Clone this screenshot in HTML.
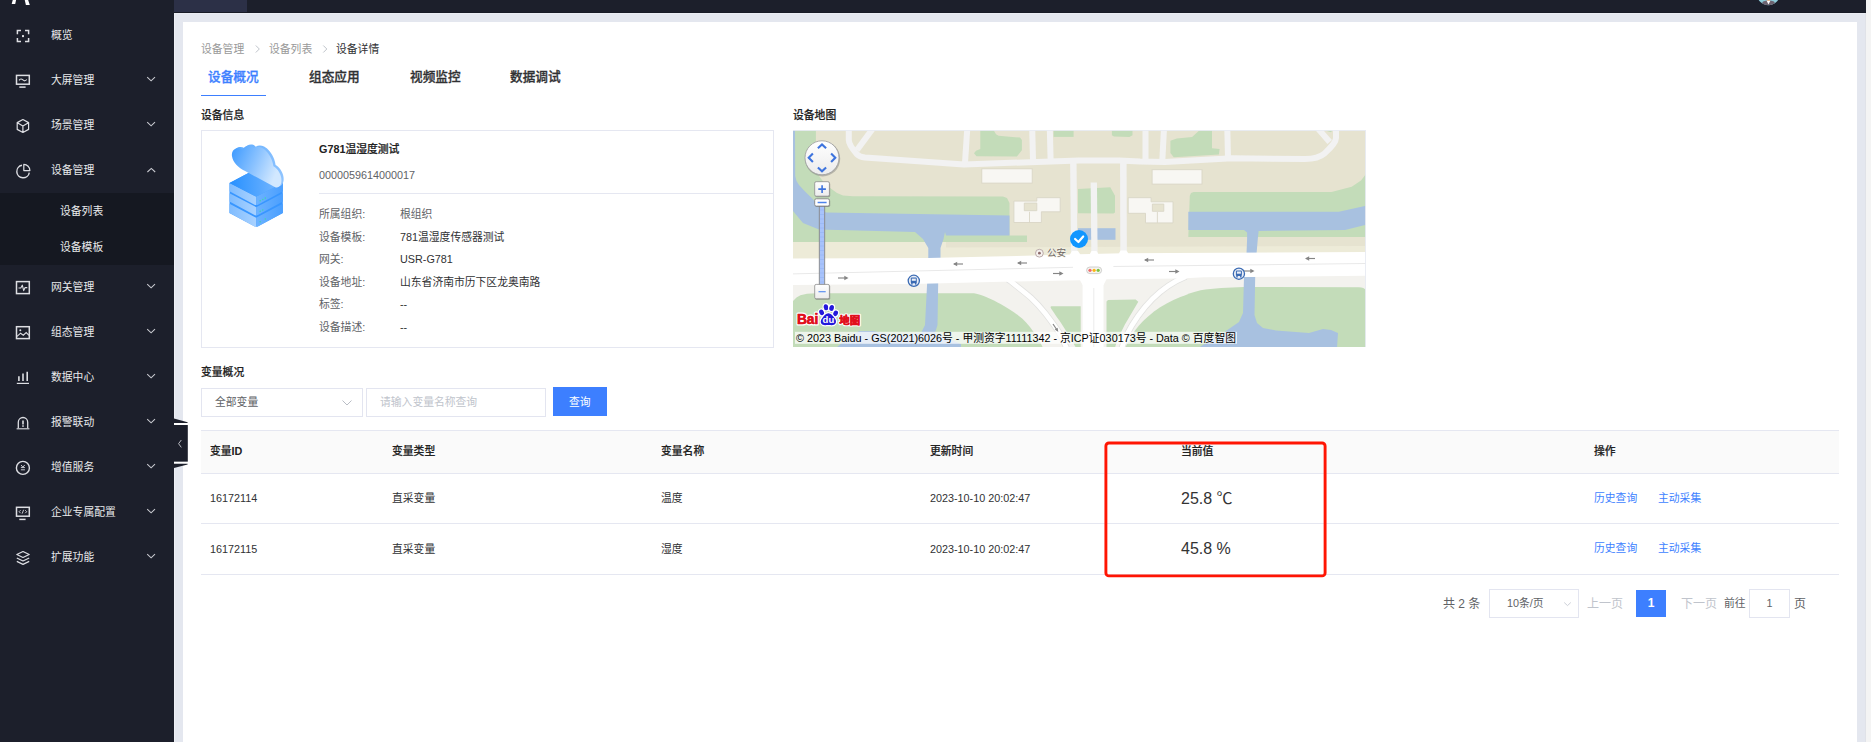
<!DOCTYPE html>
<html lang="zh-CN">
<head>
<meta charset="utf-8">
<title>设备详情</title>
<style>
*{box-sizing:border-box;margin:0;padding:0}
html,body{width:1871px;height:742px;overflow:hidden}
body{position:relative;background:#e4e7ef;font-family:"Liberation Sans","Noto Sans CJK SC",sans-serif;font-size:10.8px;color:#333;line-height:1}
.abs{position:absolute;white-space:nowrap}
#side{position:absolute;left:0;top:0;width:174px;height:742px;background:#1c1f2b}
#sub{position:absolute;left:0;top:193px;width:174px;height:72px;background:#151821}
.mi{position:absolute;left:51px;color:#e9eaec;font-size:10.8px;line-height:14px;white-space:nowrap}
.si{position:absolute;left:60px;color:#e9eaec;font-size:10.8px;line-height:14px;white-space:nowrap}
.ic{position:absolute;left:15px;width:16px;height:16px;overflow:visible}
.ar{position:absolute;left:147px;width:9px;height:6px}
#top{position:absolute;left:174px;top:0;width:1692px;height:13px;background:#1c1f2b}
#toptab{position:absolute;left:174px;top:0;width:73px;height:13px;background:#2c3047}
#scroll{position:absolute;left:1866px;top:0;width:5px;height:742px;background:#f4f4f4}
#card{position:absolute;left:183px;top:22px;width:1674px;height:720px;background:#fff}
.bc{font-size:10.8px;color:#999;top:42px;line-height:14px}
.tab{font-size:12.7px;font-weight:500;-webkit-text-stroke:0.3px;color:#303133;top:69px;line-height:16px}
.h{font-weight:500;-webkit-text-stroke:0.2px #222;color:#222;font-size:10.8px;line-height:14px}
.lb{color:#606266;left:319px;line-height:14px}
.vl{color:#303133;left:400px;line-height:14px}
.th{font-weight:500;-webkit-text-stroke:0.2px #222;color:#222;top:444px;line-height:14px}
.td{color:#303133;line-height:14px}
.lk{color:#3d7fff;line-height:14px}
.big{font-size:16px;color:#333;line-height:20px;left:1181px}
.hl{position:absolute;height:1px;background:#e5e7f1}
</style>
</head>
<body>
<div id="side">
<svg width="174" height="742" viewBox="0 0 174 742" style="position:absolute;left:0;top:0" fill="none" stroke="#dddee3" stroke-width="1.5">
<!-- logo clipped -->
<path d="M13,-1H16.300L15.200,3.900H11.700Z M24.500,-1H27.800L29.800,4.900H25.900Z" fill="#ffffff" stroke="none"/>
<!-- 1 overview -->
<path d="M17.4,34.2V30.6H21 M25,30.6H28.6V34.2 M28.6,38V41.6H25 M21,41.6H17.4V38"/>
<rect x="22" y="35.1" width="2" height="2" fill="#dddee3" stroke="none"/>
<!-- 2 big screen -->
<rect x="16.5" y="75.4" width="12.8" height="8.8"/>
<path d="M19,80.3C20.300,78.600 21.500,78.600 22.900,79.900S25.400,81.200 26.800,79.500" stroke-width="1.1"/>
<path d="M19.300,87.100H25.600" stroke-width="1.5"/>
<!-- 3 cube -->
<path d="M22.900,119.500L28.600,122.600V129.400L22.900,132.500L17.200,129.400V122.600Z M17.300,122.700L22.900,125.900L28.500,122.700 M22.900,125.900V132.400" stroke-linejoin="round" stroke-width="1.2"/>
<!-- 4 pie -->
<path d="M22,165.300A6.300,6.300 0 1 0 29.300,172.600" stroke-width="1.4"/>
<path d="M23.800,164.400A6.200,6.200 0 0 1 29.900,170.600H23.800Z" stroke-width="1.2" stroke-linejoin="round"/>
<!-- 5 gateway -->
<rect x="16.500" y="281.600" width="12.800" height="12"/>
<path d="M18.500,288H20.800L22.300,285.200L23.700,290.600L25.100,287.600H27.300" stroke-width="1.1" stroke-linejoin="round"/>
<!-- 6 picture -->
<rect x="16.500" y="326.700" width="12.800" height="11.900"/>
<path d="M17,336.400L20.600,333.200L23.300,335.200L26.200,332.600L29,335.300" stroke-width="1.1"/>
<circle cx="20.300" cy="330.300" r="1" fill="#dddee3" stroke="none"/>
<!-- 7 data -->
<path d="M16.800,383.400H29" stroke-width="1.2"/>
<path d="M18.900,376.300V381 M23,373.600V381 M27.200,371.800V381" stroke-width="1.6"/>
<!-- 8 alarm -->
<path d="M16.600,428.800H29.400" stroke-width="1.1"/>
<path d="M18.300,428.300V422.200A4.700,4.700 0 0 1 27.700,422.200V428.300" stroke-width="1.3"/>
<path d="M23,420.400V424.400" stroke-width="1.6"/><rect x="22.200" y="425.300" width="1.600" height="1.500" fill="#dddee3" stroke="none"/>
<!-- 9 value -->
<circle cx="22.900" cy="467.900" r="6.500" stroke-width="1.4"/>
<path d="M21.100,465L22.900,467.200L24.700,465 M20.900,467.600H24.900 M20.900,469.800H24.900" stroke-width="0.9"/>
<!-- 10 enterprise -->
<rect x="16.500" y="507.300" width="12.800" height="8.900"/>
<path d="M20.600,510.200L19.100,511.700L20.600,513.200 M25.200,510.200L26.700,511.700L25.200,513.200 M23.600,509.800L22.200,513.600" stroke-width="0.9"/>
<path d="M19.300,519.400H25.600" stroke-width="1.5"/>
<!-- 11 layers -->
<path d="M23,551.500L29.200,554.500L23,557.500L16.800,554.500Z" stroke-linejoin="round" stroke-width="1.2"/>
<path d="M16.800,558L23,561L29.200,558 M16.800,561.400L23,564.400L29.200,561.400" stroke-linejoin="round" stroke-width="1.2"/>
<!-- arrows -->
<g stroke="#c9cad0" stroke-width="1.1">
<path d="M147.200,77.200L151.100,80.800L155,77.200"/>
<path d="M147.200,122.200L151.100,125.800L155,122.200"/>
<path d="M147.400,172L151.300,168.400L155.200,172"/>
<path d="M147.200,284.200L151.100,287.800L155,284.200"/>
<path d="M147.200,329.200L151.100,332.800L155,329.200"/>
<path d="M147.200,374.200L151.100,377.800L155,374.200"/>
<path d="M147.200,419.200L151.100,422.800L155,419.200"/>
<path d="M147.200,464.200L151.100,467.800L155,464.200"/>
<path d="M147.200,509.200L151.100,512.800L155,509.200"/>
<path d="M147.200,554.200L151.100,557.800L155,554.200"/>
</g>
</svg>

  <div id="sub"></div>
  <div class="mi" style="top:28px">概览</div>
  <div class="mi" style="top:73px">大屏管理</div>
  <div class="mi" style="top:118px">场景管理</div>
  <div class="mi" style="top:163px">设备管理</div>
  <div class="si" style="top:204px">设备列表</div>
  <div class="si" style="top:240px">设备模板</div>
  <div class="mi" style="top:280px">网关管理</div>
  <div class="mi" style="top:325px">组态管理</div>
  <div class="mi" style="top:370px">数据中心</div>
  <div class="mi" style="top:415px">报警联动</div>
  <div class="mi" style="top:460px">增值服务</div>
  <div class="mi" style="top:505px">企业专属配置</div>
  <div class="mi" style="top:550px">扩展功能</div>
</div>
<div id="top"></div>
<div id="toptab"></div>
<div id="scroll"></div>
<div class="abs" style="left:174px;top:12px;width:1692px;height:1px;background:#181b26"></div>
<div class="abs" style="left:174px;top:13px;width:1692px;height:1px;background:#eaecf3"></div>
<div class="abs" style="left:174px;top:13px;width:1px;height:729px;background:#edeff5"></div>
<div class="abs" style="left:1865px;top:13px;width:1px;height:729px;background:#e0e2e8"></div>
<div id="card"></div>

<!-- breadcrumb -->
<div class="abs bc" style="left:201px">设备管理</div>
<div class="abs bc" style="left:269px">设备列表</div>
<div class="abs bc" style="left:336px;color:#303133">设备详情</div>

<!-- tabs -->
<div class="abs tab" style="left:208px;color:#3d7fff">设备概况</div>
<div class="abs tab" style="left:309px">组态应用</div>
<div class="abs tab" style="left:410px">视频监控</div>
<div class="abs tab" style="left:510px">数据调试</div>
<div class="abs" style="left:201px;top:95px;width:65px;height:1px;background:#3d7fff"></div>

<!-- device info -->
<div class="abs h" style="left:201px;top:108px">设备信息</div>
<div class="abs" style="left:201px;top:130px;width:573px;height:218px;border:1px solid #e5e7f1;background:#fff"></div>
<div class="abs h" style="left:319px;top:142px"><b style="-webkit-text-stroke:0">G781</b>温湿度测试</div>
<div class="abs" style="left:319px;top:168px;color:#606266;line-height:14px">0000059614000017</div>
<div class="hl" style="left:319px;top:193px;width:454px"></div>
<div class="abs lb" style="top:207px">所属组织:</div><div class="abs vl" style="top:207px;color:#606266">根组织</div>
<div class="abs lb" style="top:230px">设备模板:</div><div class="abs vl" style="top:230px">781温湿度传感器测试</div>
<div class="abs lb" style="top:252px">网关:</div><div class="abs vl" style="top:252px">USR-G781</div>
<div class="abs lb" style="top:275px">设备地址:</div><div class="abs vl" style="top:275px">山东省济南市历下区龙奥南路</div>
<div class="abs lb" style="top:297px">标签:</div><div class="abs vl" style="top:297px">--</div>
<div class="abs lb" style="top:320px">设备描述:</div><div class="abs vl" style="top:320px">--</div>

<!-- map -->
<div class="abs h" style="left:793px;top:108px">设备地图</div>
<div id="map" class="abs" style="left:793px;top:130px;width:573px;height:217px;background:#e6e3d0;overflow:hidden">
<svg width="573" height="218" viewBox="0 0 573 218" style="position:absolute;left:0;top:0;display:block">
<defs>
<linearGradient id="gbtn" x1="0" y1="0" x2="0" y2="1"><stop offset="0" stop-color="#ffffff"/><stop offset="1" stop-color="#ececec"/></linearGradient>
<linearGradient id="gtrk" x1="0" y1="0" x2="1" y2="0"><stop offset="0" stop-color="#8ea3d8"/><stop offset="0.5" stop-color="#a9c2f5"/><stop offset="1" stop-color="#8ea3d8"/></linearGradient>
</defs>
<rect width="573" height="218" fill="#e6e3d0"/>
<!-- pale strip above main road -->
<polygon points="0,112 153,112 153,117.5 573,116 573,124 0,130" fill="#edebd8"/>
<!-- below-road base -->
<polygon points="0,150 573,142 573,218 0,218" fill="#f3f2ee"/>
<!-- greens top -->
<g fill="#c3dcb9">
<polygon points="0,0 22.9,0 22.9,36 26,46 32,54 37.8,58.4 44,63 50,65.5 60,66.3 210,66.5 214,68 216.5,73 216.5,112 0,112"/>
<polygon points="153,105.5 234,105.5 234,112 153,112"/>
<polygon points="187.300,0 200.500,0 203,4.300 205.600,5.700 227,7.600 228.900,10.100 228.900,20.200 223.900,26.600 183.500,26.200 181,23.300 183,20.700 187.300,18.900"/>
<rect x="260.6" y="0" width="20" height="6.9"/>
<polygon points="318.9,0 339.5,0 339.5,5.3 336.4,6.9 321,6.5 318.9,5.3"/>
<polygon points="406.8,0 419,0 419,18.3 426.6,19.1 425.9,24.5 380.8,27.2 377.4,22.9 377.4,10.7 383.8,8.4 399.1,6.9"/>
<polygon points="530.6,0 539.7,0 538,2.3"/>
<polygon points="285,58.9 317.3,57.3 322,65.7 322,82.5 320.5,83.5 285,83.3"/>
<polygon points="396.800,65.700 398,63 400.600,62 538.500,61.900 558.700,56.700 568,50.500 573,44.100 573,107 395.300,107"/>
</g>
<!-- water -->
<g fill="#a8c1e0">
<polygon points="0,0 2,0 2.2,46 3.5,51 6,55 12,61.5 19.5,68.7 26.9,78 33,82.5 216.5,85.6 216.5,105.5 153,105.5 152,102 150.5,109 147.5,118 147.5,129 135.3,129 135.3,118 130,109 122,102 26,99.5 10,93 0,81"/>
<polygon points="395.3,81.8 545.9,81.8 573,75.7 573,94.8 552,100.1 465.6,100.9 464.8,109 463.5,124 453.5,124 454.1,109 454.1,102.4 451,100.1 395.3,100.1"/>
<rect x="285" y="98.2" width="37.5" height="11.6"/>
</g>
<!-- greens bottom -->
<g fill="#c3dcb9">
<path d="M0,171L3.500,167.600L7.400,165.200L14,163.800L23,163.300L181,163.300C190,165 200,170 207.600,174C214,177.500 220,181.500 225.300,185.400C231,189.500 236,195 240.400,201.800C244,207 248,213 250,218H0Z"/>
<path d="M258.500,176.200H287.700V218H283C279,210 272,199 266,190C262,184 258.500,179.500 257.600,177.400Q257.500,176.200 258.500,176.200Z"/>
<polygon points="313.5,171.5 315,170.1 342.6,169.4 345.3,171.7 331.9,194.6 324.2,209.9 321.9,218 313.5,218"/>
<path d="M332,218C336,210 339,205 342,200.500C347,193.500 353,188 361,181.600C369,175.500 378,171 387.400,167.100C394,164.400 400,162 407.600,160.200C420,158.400 436,157.400 450.500,157L566,157.200Q571,157.500 573,160V218Z"/>
</g>
<!-- water bottom -->
<g fill="#a8c1e0">
<polygon points="134.2,152 145.200,152 144.500,195 142,203 168,214 168,218 43,218 50,212 66,201 80,201 100,205 128,203 132,195"/>
<polygon points="451,147 462.2,147 461.5,185 464,193 470,198 483,200.5 516,203 530,199 538,200 545,203 544,218 405,218 430,203 446,192 450,183"/>
</g>
<!-- buildings -->
<g fill="#f8f7f3" stroke="#d9d6c6" stroke-width="0.9">
<rect x="188.8" y="38.800" width="50.400" height="14.300"/>
<rect x="359.100" y="39.700" width="49.900" height="14.400"/>
<path d="M220.9,71.1H243.8V67.7H267.2V81.8H248.4V92.5H220.9Z M231.3,73.1V80.7H243.8V73.1Z" fill-rule="evenodd"/>
<path d="M236.5,81.8V92.5" fill="none"/>
<path d="M335.2,67.7H358.1V71.8H380V92.9H352.5V83.3H335.2Z M359.4,74.1V81.3H370.8V74.1Z" fill-rule="evenodd"/>
<path d="M364.4,82V92.9" fill="none"/>
</g>
<!-- minor roads -->
<g fill="none" stroke="#f2f2f2" stroke-width="6" stroke-linejoin="round" stroke-linecap="butt">
<path d="M55.8,-2V10C55.8,14 62,22 64,24.3C66,26.6 69,27.2 72,27.500L171,34.4L286,30.6L326,30.6L347,31.6L372,32L439,28.3L512,29C520,29 528,26.500 531.500,23.500C536,19.500 543,12 543,8V-2"/>
<path d="M79.5,-1L64,20"/>
<path d="M174.3,-2L172,33"/>
<path d="M239.2,-2L240,30"/>
<path d="M256.8,-2L257.6,30"/>
<path d="M352.5,-2V30"/>
<path d="M371,-2L369.3,31"/>
<path d="M434.3,-2L435,28"/>
<path d="M536.7,12L524.5,-2"/>
<path d="M280.300,31L281.300,126" stroke-width="6.400"/>
<path d="M300.8,52.5L301.5,126" stroke-width="6.3"/>
<path d="M330.3,31L330.6,126" stroke-width="6.5"/>
</g>
<!-- ramps casing -->
<g fill="none" stroke="#e2e2e0" stroke-width="6.4">
<path d="M215,149.500L217.700,151.300C226,158 232,162.500 237.900,167.700C243,172.500 248,178 252,183C257,189.500 262,196 265.600,201.800C268.500,206.500 271,211.500 272.500,215.600L274,219"/>
<path d="M393,146.500C367,157 348,177 333,206L328.500,219"/>
</g>
<g fill="none" stroke="#ffffff" stroke-width="4.8">
<path d="M215,149.500L217.700,151.300C226,158 232,162.500 237.900,167.700C243,172.500 248,178 252,183C257,189.500 262,196 265.600,201.800C268.500,206.500 271,211.500 272.500,215.600L274,219"/>
<path d="M393,146.500C367,157 348,177 333,206L328.500,219"/>
</g>
<!-- main road -->
<polygon points="0,128.6 135,128.1 200,126.6 286,124.2 330,123.2 573,122 573,145.8 411,147.3 387,148.5 313.5,149.3 310.5,155 289.6,155 287,150.3 209,151.8 130,153.8 0,154.9" fill="#ffffff"/>
<path d="M276,126L279,121H285L288,125.5 M296,125.5L298.5,121H303.5L306,125 M325,125L327.5,120.5H333.5L336,124.5" fill="#ffffff"/>
<rect x="289.6" y="150" width="20.9" height="70" fill="#ffffff"/>
<path d="M300.8,158V218" stroke="#e6e6e6" stroke-width="0.8" fill="none"/>
<path d="M0,143.9L280,137.3 M320.4,136.5L573,133.5" stroke="#e9e9e9" stroke-width="1" fill="none"/>
</svg>

<svg width="573" height="218" viewBox="0 0 573 218" style="position:absolute;left:0;top:0;display:block;font-family:'Liberation Sans','Noto Sans CJK SC',sans-serif">
<!-- arrows -->
<g stroke="#858585" stroke-width="1.15" fill="#858585">
<g id="al"><path d="M161,134H170" fill="none"/><path d="M160,134L164.2,131.7V136.3Z" stroke="none"/></g>
<g transform="translate(64,-1)"><path d="M161,134H170" fill="none"/><path d="M160,134L164.2,131.7V136.3Z" stroke="none"/></g>
<g transform="translate(191,-4)"><path d="M161,134H170" fill="none"/><path d="M160,134L164.2,131.7V136.3Z" stroke="none"/></g>
<g transform="translate(352,-5.5)"><path d="M161,134H170" fill="none"/><path d="M160,134L164.2,131.7V136.3Z" stroke="none"/></g>
<g><path d="M45,148H54" fill="none"/><path d="M55.5,148L51.3,145.7V150.3Z" stroke="none"/></g>
<g transform="translate(215,-4.5)"><path d="M45,148H54" fill="none"/><path d="M55.5,148L51.3,145.7V150.3Z" stroke="none"/></g>
<g transform="translate(331,-6.5)"><path d="M45,148H54" fill="none"/><path d="M55.5,148L51.3,145.7V150.3Z" stroke="none"/></g>
<g transform="translate(406,-7)"><path d="M45,148H54" fill="none"/><path d="M55.5,148L51.3,145.7V150.3Z" stroke="none"/></g>
<g><path d="M260,194L264,200" fill="none"/><path d="M265.3,202L261.8,199.6L264.6,197.8Z" stroke="none"/></g>
</g>
<!-- traffic light -->
<rect x="293.6" y="137" width="15" height="6.6" rx="3.3" fill="#f5f5f0" stroke="#bdbdbd" stroke-width="0.7"/>
<circle cx="297" cy="140.3" r="1.6" fill="#ef6b6b"/><circle cx="301.1" cy="140.3" r="1.6" fill="#fdb515"/><circle cx="305.2" cy="140.3" r="1.6" fill="#7dc242"/>
<!-- bus stops -->
<g id="bus1" transform="translate(120.8,150.8)"><circle r="5.6" fill="#e9eef7" stroke="#3a6ab3" stroke-width="1.3"/><rect x="-3" y="-3.2" width="6" height="5.6" rx="1" fill="#3a6ab3"/><rect x="-2" y="-2.2" width="4" height="2.2" fill="#e9eef7"/><rect x="-2.6" y="2" width="1.4" height="1.8" fill="#3a6ab3"/><rect x="1.2" y="2" width="1.4" height="1.8" fill="#3a6ab3"/></g>
<g transform="translate(445.9,143.7)"><circle r="5.6" fill="#e9eef7" stroke="#3a6ab3" stroke-width="1.3"/><rect x="-3" y="-3.2" width="6" height="5.6" rx="1" fill="#3a6ab3"/><rect x="-2" y="-2.2" width="4" height="2.2" fill="#e9eef7"/><rect x="-2.6" y="2" width="1.4" height="1.8" fill="#3a6ab3"/><rect x="1.2" y="2" width="1.4" height="1.8" fill="#3a6ab3"/></g>
<!-- police label -->
<circle cx="246.4" cy="123.2" r="3.9" fill="#f7f3f0" stroke="#b3a3a3" stroke-width="0.9"/><circle cx="246.4" cy="123.2" r="1.4" fill="#8c6b6b"/>
<text x="254" y="126" font-size="9.6" fill="#6b6461" stroke="#f4f2e8" stroke-width="1.2" paint-order="stroke" stroke-linejoin="round">公安</text>
<!-- pin -->
<circle cx="286" cy="109" r="9" fill="#1196ff"/>
<path d="M282.1,109L285.4,112L290.2,106.5" fill="none" stroke="#fff" stroke-width="2.2" stroke-linecap="round" stroke-linejoin="round"/>
<!-- nav control -->
<circle cx="29.6" cy="28.8" r="17.6" fill="#6f6f6f" opacity="0.4"/>
<circle cx="29" cy="27.8" r="17" fill="url(#gbtn)" stroke="#9a9a9a" stroke-width="0.8"/>
<g fill="none" stroke="#3e74de" stroke-width="2.1" stroke-linejoin="miter">
<path d="M24.9,18.2L29,14.4L33.1,18.2"/><path d="M24.9,37.400L29,41.200L33.100,37.400"/>
<path d="M19.9,23.500L15.700,27.800L19.900,32.100"/><path d="M38.100,23.500L42.300,27.800L38.100,32.100"/>
</g>
<!-- zoom slider -->
<rect x="26.3" y="75" width="5.4" height="80" fill="#a8c3fb" stroke="#868686" stroke-width="0.9"/>
<path d="M27,80H31M27,84.500H31M27,89H31M27,93.500H31M27,98H31M27,102.500H31M27,107H31M27,111.500H31M27,116H31M27,120.500H31M27,125H31M27,129.500H31M27,134H31M27,138.500H31M27,143H31M27,147.500H31M27,152H31" stroke="#94b4f5" stroke-width="0.6" fill="none"/>
<rect x="22.2" y="52.400" width="15" height="14.800" rx="1.600" fill="#5a5a5a" opacity="0.45"/>
<rect x="21.700" y="51.700" width="14.700" height="14.500" rx="1.500" fill="url(#gbtn)" stroke="#8c8c8c" stroke-width="0.8"/>
<path d="M25.300,59.100H32.900M29.100,55.300V62.900" stroke="#3e74de" stroke-width="1.600" fill="none"/>
<rect x="22.200" y="69.300" width="15" height="7.600" rx="1.600" fill="#5a5a5a" opacity="0.45"/>
<rect x="21.700" y="68.800" width="14.700" height="7.300" rx="1.500" fill="#ffffff" stroke="#858585" stroke-width="0.9"/>
<path d="M24.600,72.500H33.600" stroke="#4d82ea" stroke-width="1.500" fill="none"/>
<rect x="22.200" y="155" width="15" height="14.800" rx="1.600" fill="#5a5a5a" opacity="0.45"/>
<rect x="21.700" y="154.400" width="14.700" height="14.400" rx="1.500" fill="url(#gbtn)" stroke="#8c8c8c" stroke-width="0.8"/>
<path d="M25.500,161.700H32.700" stroke="#5b8ff0" stroke-width="1.200" fill="none"/>
<!-- baidu logo -->
<g>
<text x="3.9" y="194.2" font-size="15" font-weight="bold" fill="#e10f1c" stroke="#fff" stroke-width="3" paint-order="stroke" stroke-linejoin="round" textLength="21.4" lengthAdjust="spacingAndGlyphs">Bai</text>
<text x="3.9" y="194.2" font-size="15" font-weight="bold" fill="#e10f1c" stroke="#e10f1c" stroke-width="0.5" textLength="21.4" lengthAdjust="spacingAndGlyphs">Bai</text>
<g stroke="#fff" stroke-width="2.4" stroke-linejoin="round" paint-order="stroke" fill="#2319dc">
<ellipse cx="28.6" cy="182.4" rx="2.3" ry="2.9" transform="rotate(-25 28.6 182.4)"/>
<ellipse cx="33" cy="177.3" rx="2.3" ry="3" transform="rotate(-8 33 177.3)"/>
<ellipse cx="38.6" cy="177.9" rx="2.3" ry="3" transform="rotate(12 38.6 177.9)"/>
<ellipse cx="42.6" cy="183.4" rx="2.3" ry="2.8" transform="rotate(25 42.6 183.4)"/>
<path d="M35.4,183.2c2.600,0 4.300,2.600 6.100,4.700c1.900,2.200 2.300,5.700 -0.600,6.900c-1.800,0.800 -3.600,0.200 -5.500,0.200s-3.700,0.600 -5.500,-0.200c-2.900,-1.200 -2.500,-4.700 -0.600,-6.900c1.800,-2.100 3.500,-4.700 6.100,-4.700z"/>
</g>
<text x="29.6" y="193.2" font-size="9.6" font-weight="bold" fill="#fff" textLength="11.6" lengthAdjust="spacingAndGlyphs">du</text>
<text x="46.3" y="193.8" font-size="10.4" font-weight="900" fill="#e10f1c" stroke="#fff" stroke-width="2.6" paint-order="stroke" stroke-linejoin="round">地图</text>
<text x="46.3" y="193.8" font-size="10.4" font-weight="900" fill="#e10f1c" stroke="#e10f1c" stroke-width="0.4">地图</text>
</g>
<!-- copyright -->
<rect x="2" y="201.8" width="442" height="12" fill="#ffffff" opacity="0.72"/>
<text x="3" y="211.8" font-size="11" fill="#000" textLength="440" lengthAdjust="spacingAndGlyphs">© 2023 Baidu - GS(2021)6026号 - 甲测资字11111342 - 京ICP证030173号 - Data © 百度智图</text>
<rect x="0" y="0" width="573" height="1" fill="#e8ebf3" opacity="0.9"/>
<rect x="572" y="0" width="1" height="218" fill="#e8ebf3" opacity="0.9"/>
</svg>

</div>

<!-- variables -->
<div class="abs h" style="left:201px;top:365px">变量概况</div>
<div class="abs" style="left:201px;top:388px;width:162px;height:29px;border:1px solid #e3e5f0;background:#fff"></div>
<div class="abs" style="left:215px;top:395px;color:#606266;line-height:14px">全部变量</div>
<div class="abs" style="left:366px;top:388px;width:180px;height:29px;border:1px solid #e3e5f0;background:#fff"></div>
<div class="abs" style="left:380px;top:395px;color:#c0c4cc;line-height:14px">请输入变量名称查询</div>
<div class="abs" style="left:553px;top:387px;width:54px;height:29px;background:#3d7fff"></div>
<div class="abs" style="left:569px;top:395px;color:#fff;line-height:14px">查询</div>

<!-- table -->
<div class="abs" style="left:201px;top:430px;width:1638px;height:44px;background:#fafafa;border-top:1px solid #e5e7f1;border-bottom:1px solid #e5e7f1"></div>
<div class="hl" style="left:201px;top:523px;width:1638px"></div>
<div class="hl" style="left:201px;top:574px;width:1638px"></div>
<div class="abs th" style="left:210px">变量<b style="-webkit-text-stroke:0">ID</b></div>
<div class="abs th" style="left:392px">变量类型</div>
<div class="abs th" style="left:661px">变量名称</div>
<div class="abs th" style="left:930px">更新时间</div>
<div class="abs th" style="left:1181px">当前值</div>
<div class="abs th" style="left:1594px">操作</div>

<div class="abs td" style="left:210px;top:491px">16172114</div>
<div class="abs td" style="left:392px;top:491px">直采变量</div>
<div class="abs td" style="left:661px;top:491px">温度</div>
<div class="abs td" style="left:930px;top:491px">2023-10-10 20:02:47</div>
<div class="abs big" style="top:489px">25.8 ℃</div>
<div class="abs lk" style="left:1594px;top:491px">历史查询</div>
<div class="abs lk" style="left:1658px;top:491px">主动采集</div>

<div class="abs td" style="left:210px;top:542px">16172115</div>
<div class="abs td" style="left:392px;top:542px">直采变量</div>
<div class="abs td" style="left:661px;top:542px">湿度</div>
<div class="abs td" style="left:930px;top:542px">2023-10-10 20:02:47</div>
<div class="abs big" style="top:539px">45.8 %</div>
<div class="abs lk" style="left:1594px;top:541px">历史查询</div>
<div class="abs lk" style="left:1658px;top:541px">主动采集</div>

<!-- red box -->
<svg class="abs" width="240" height="150" style="left:1100px;top:436px"><rect x="5.9" y="7" width="219.2" height="132.9" rx="3" fill="none" stroke="#ff1503" stroke-width="2.9"/></svg>

<!-- pagination -->
<div class="abs" style="left:1443px;top:597px;color:#606266;font-size:12px;line-height:14px">共 2 条</div>
<div class="abs" style="left:1489px;top:589px;width:90px;height:29px;border:1px solid #e3e5f0;background:#fff"></div>
<div class="abs" style="left:1507px;top:596px;color:#606266;line-height:14px">10条/页</div>
<div class="abs" style="left:1587px;top:597px;color:#c0c4cc;font-size:12px;line-height:14px">上一页</div>
<div class="abs" style="left:1636px;top:590px;width:30px;height:27px;background:#3d7fff"></div>
<div class="abs" style="left:1636px;top:596px;width:30px;text-align:center;color:#fff;font-weight:bold;font-size:12px;line-height:14px">1</div>
<div class="abs" style="left:1681px;top:597px;color:#c0c4cc;font-size:12px;line-height:14px">下一页</div>
<div class="abs" style="left:1724px;top:596px;color:#606266;line-height:14px">前往</div>
<div class="abs" style="left:1749px;top:589px;width:41px;height:29px;border:1px solid #e3e5f0;background:#fff"></div>
<div class="abs" style="left:1749px;top:596px;width:41px;text-align:center;color:#606266;line-height:14px">1</div>
<div class="abs" style="left:1794px;top:597px;color:#606266;font-size:12px;line-height:14px">页</div>
<!-- device icon -->
<svg class="abs" width="100" height="100" viewBox="0 0 100 100" style="left:210px;top:135px">
<defs>
<linearGradient id="dtop" x1="0" y1="0" x2="1" y2="0"><stop offset="0" stop-color="#2790ff"/><stop offset="1" stop-color="#7ab9ff"/></linearGradient>
<linearGradient id="dl" x1="0" y1="0" x2="1" y2="0"><stop offset="0" stop-color="#7fbcff"/><stop offset="1" stop-color="#a9d2ff"/></linearGradient>
<linearGradient id="dr" x1="0" y1="0" x2="1" y2="0"><stop offset="0" stop-color="#6db3ff"/><stop offset="1" stop-color="#4a9fff"/></linearGradient>
<linearGradient id="dc" x1="0" y1="0" x2="1" y2="0.35"><stop offset="0" stop-color="#3b99ff"/><stop offset="0.55" stop-color="#8cc3ff"/><stop offset="1" stop-color="#d2e8ff"/></linearGradient>
<linearGradient id="dcb" x1="0" y1="0" x2="1" y2="0"><stop offset="0" stop-color="#5aaaff"/><stop offset="1" stop-color="#8fc4ff"/></linearGradient>
</defs>
<!-- dark body -->
<path d="M19.500,48L46,34L72.800,48V78L48,91.200Q46.200,92 44.400,91.200L19.500,78Z" fill="#3896ff"/>
<!-- layer 3 -->
<path d="M19.500,68.800L46.200,82.800V91.800Q45,91.800 44,91.200L19.500,78Z" fill="url(#dl)"/>
<path d="M46.200,82.800L72.800,68.800V78L48.400,91.200Q47.400,91.800 46.200,91.800Z" fill="url(#dr)"/>
<!-- layer 2 -->
<path d="M19.500,58.200L46.200,72.200V80.400Q45,80.400 44,79.800L19.500,66.600Z" fill="url(#dl)"/>
<path d="M46.200,72.200L72.800,58.200V66.600L48.400,79.800Q47.400,80.400 46.200,80.400Z" fill="url(#dr)"/>
<!-- layer 1 -->
<path d="M19.500,48L46.200,61.600V70Q45,70 44,69.400L19.500,56.200Z" fill="url(#dl)"/>
<path d="M46.200,61.600L72.800,48V56.200L48.400,69.400Q47.400,70 46.200,70Z" fill="url(#dr)"/>
<path d="M19.500,48L46,34L72.800,48L46.200,61.800Z" fill="url(#dtop)"/>
<!-- leds -->
<g fill="#3fd3b0"><circle cx="50.200" cy="65.800" r="0.800"/><circle cx="52.800" cy="64.500" r="0.800"/><circle cx="55.300" cy="63.100" r="0.800"/>
<circle cx="50.200" cy="76.300" r="0.800"/><circle cx="52.800" cy="75" r="0.800"/>
<circle cx="50.200" cy="86.800" r="0.800"/><circle cx="55.300" cy="84" r="0.800"/></g>
<!-- cloud back -->
<path d="M22.600,21C22,17.500 23.500,14.300 26.500,13.300C28.800,12.500 31,13 33,14.300C34.500,11.500 37.500,10 40.500,10.500C42,10.800 43.200,11.600 44.200,12.700C46.500,11 49.500,11 52.500,12.500C56.500,14.500 60.500,19.500 62.500,25C63.300,27.200 63.800,29.300 64,31C67.500,32.800 70.500,37 71.600,41.500C72.600,45.500 72,49.500 69.500,51.500C68.300,52.400 67,52.500 65.800,52L35.700,35.700C29,32.500 23.500,27 22.600,21Z" fill="url(#dcb)" transform="translate(1.600,-1)"/>
<!-- cloud front -->
<path d="M22.600,21C22,17.500 23.500,14.300 26.500,13.300C28.800,12.500 31,13 33,14.300C34.500,11.500 37.500,10 40.500,10.500C42,10.800 43.200,11.600 44.200,12.700C46.500,11 49.500,11 52.500,12.500C56.500,14.500 60.500,19.500 62.500,25C63.300,27.200 63.800,29.300 64,31C67.500,32.800 70.500,37 71.600,41.500C72.600,45.500 72,49.500 69.500,51.500C68.300,52.400 67,52.500 65.800,52L35.700,35.700C29,32.500 23.500,27 22.600,21Z" fill="url(#dc)" transform="translate(-0.600,0.300)"/>
</svg>
<!-- breadcrumb separators -->
<svg class="abs" width="140" height="12" style="left:250px;top:43px" fill="none" stroke="#b8bcc4" stroke-width="0.9">
<path d="M5.800,2.500L9.300,6L5.800,9.500"/><path d="M73.300,2.500L76.800,6L73.300,9.500"/>
</svg>
<!-- select arrows -->
<svg class="abs" width="12" height="8" style="left:341px;top:399px" fill="none" stroke="#b9bdc5" stroke-width="1"><path d="M1.500,1.500L6,6L10.500,1.500"/></svg>
<svg class="abs" width="10" height="8" style="left:1563px;top:601px" fill="none" stroke="#c6cad2" stroke-width="0.9"><path d="M1.200,1.500L4.500,4.600L7.800,1.500"/></svg>
<!-- collapse handle -->
<svg class="abs" width="16" height="50" style="left:174px;top:418px">
<path d="M0,0.600L13.600,4.300V5H0Z" fill="#1c1f2b"/>
<rect x="0" y="5" width="14" height="2" fill="#ffffff"/>
<rect x="0" y="7" width="13.800" height="36.800" fill="#1c1f2b"/>
<rect x="0" y="43.800" width="14" height="2" fill="#ffffff"/>
<path d="M0,45.800H13.600V46.400L0,50Z" fill="#1c1f2b"/>
<path d="M7.300,22L4.600,25.700L7.300,29.400" fill="none" stroke="#c8cad0" stroke-width="0.9"/>
</svg>
<!-- avatar -->
<svg class="abs" width="24" height="8" style="left:1757px;top:0px">
<defs><clipPath id="avc"><circle cx="11.400" cy="-6.400" r="11.600"/></clipPath></defs>
<g clip-path="url(#avc)"><rect x="0" y="-17" width="24" height="24" fill="#8ecbd9"/>
<path d="M4,5L6,1.500L11.500,0L17,1.500L19,5Z" fill="#6d6370"/><path d="M9.500,0.500L11.500,4.500L13.500,0.500Z" fill="#ffffff"/><rect x="10.300" y="-2" width="2.400" height="2.800" fill="#f4b57c"/></g>
</svg>

</body>
</html>
